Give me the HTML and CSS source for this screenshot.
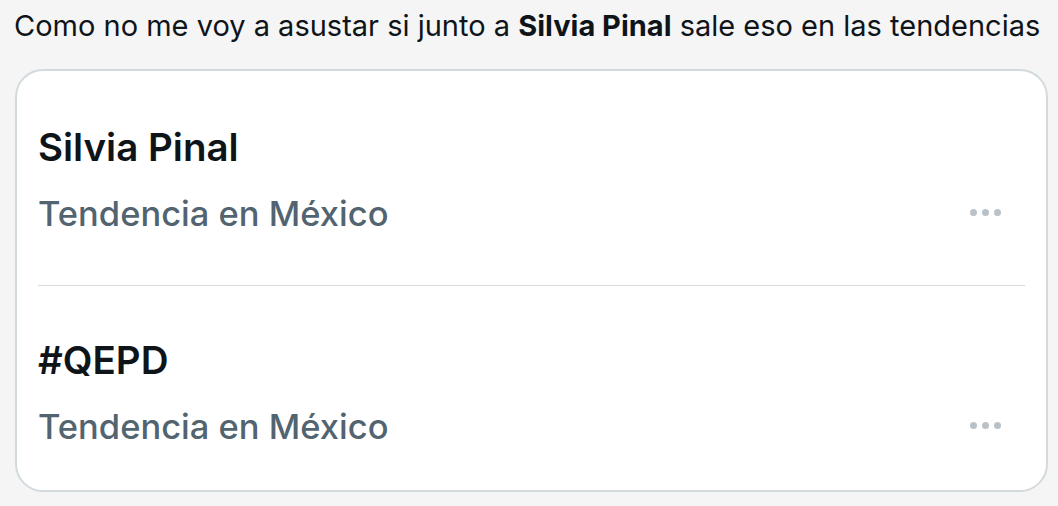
FILE: index.html
```html
<!DOCTYPE html>
<html lang="es">
<head>
    <meta charset="UTF-8">
    <meta name="viewport" content="width=device-width, initial-scale=1.0">
    <title>Tendencias</title>
    <link rel="stylesheet" href="styles.css">
</head>
<body>
    <p class="tweet-text">Como no me voy a asustar si junto a <strong>Silvia Pinal</strong> sale eso en las tendencias</p>

    <div class="trends-card">
        <div class="trend first">
            <div class="trend-title">Silvia Pinal</div>
            <div class="trend-meta">
                <span>Tendencia en México</span>
                <span class="dots"><i></i><i></i><i></i></span>
            </div>
        </div>
        <div class="divider"></div>
        <div class="trend last">
            <div class="trend-title">#QEPD</div>
            <div class="trend-meta">
                <span>Tendencia en México</span>
                <span class="dots"><i></i><i></i><i></i></span>
            </div>
        </div>
    </div>
</body>
</html>
```

FILE: styles.css
```css
body {
    font-family: Inter, "Liberation Sans", sans-serif;
    margin: 0;
    padding: 0;
    background-color: #f5f5f6;
    color: #0f1419;
}

/* Texte du tweet */
.tweet-text {
    margin: 0;
    padding: 8px 0 0 14px;
    font-size: 29px;
    line-height: 36px;
    white-space: nowrap;
}

.tweet-text strong {
    font-weight: 700;
}

/* Carte des tendances */
.trends-card {
    margin: 25px 10px 0 15px;
    background-color: white;
    border: 2px solid #d3dade;
    border-radius: 28px;
}

.trend {
    padding: 0 21px;
}

.trend.first {
    padding-top: 53px;
    padding-bottom: 49px;
}

.trend.last {
    padding-top: 51px;
    padding-bottom: 41px;
}

.trend-title {
    font-size: 38.5px;
    line-height: 46px;
    font-weight: 600;
}

.trend-meta {
    display: flex;
    justify-content: space-between;
    align-items: center;
    margin-top: 22px;
    padding-right: 24px;
    font-size: 34.5px;
    line-height: 44px;
    font-weight: 500;
    color: #536471;
}

/* Trois points */
.dots {
    display: flex;
    gap: 5px;
    margin-top: -3px;
}

.dots i {
    width: 7px;
    height: 7px;
    border-radius: 50%;
    background-color: #b9c2c9;
}

.divider {
    height: 1px;
    margin: 0 21px;
    background-color: #d6dbdf;
}
```
